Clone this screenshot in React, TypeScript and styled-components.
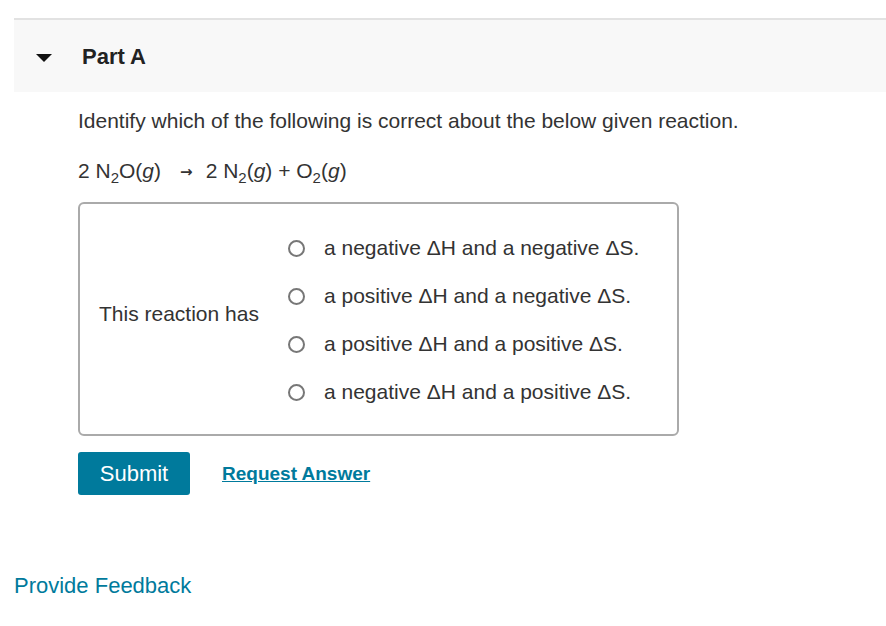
import React from 'react';
import styled, {createGlobalStyle} from 'styled-components';

const teal = '#007a9c';
const ink = '#333';

const GlobalStyle = createGlobalStyle`
  body {
    margin: 0;
    background: white;
    font-family: "Liberation Sans", Arial, sans-serif;
    color: ${ink};
  }
`;

const Page = styled.div`
  padding: 18px 0 0 14px;
`;

const Header = styled.div`
  display: flex;
  align-items: center;
  height: 72px;
  border-top: 2px solid #e2e2e2;
  background: #f8f8f8;
`;

const Caret = styled.span`
  width: 0;
  height: 0;
  margin: 3px 30px 0 22px;
  border-left: 8px solid transparent;
  border-right: 8px solid transparent;
  border-top: 8px solid #111;
`;

const Title = styled.h2`
  margin: 1px 0 0;
  font-size: 22px;
  font-weight: bold;
  color: #222;
`;

const Body = styled.div`
  padding: 0 0 0 64px;
`;

const Prompt = styled.p`
  margin: 18px 0 0;
  font-size: 21px;
  line-height: 22px;
`;

const Equation = styled.p`
  margin: 28px 0 0;
  font-size: 21px;
  line-height: 22px;
  white-space: pre;
  sub {
    font-size: 15px;
    line-height: 0;
    vertical-align: -5px;
  }
`;

const Arrow = styled.span`
  display: inline-block;
  margin: 0 13px 0 19px;
  font-family: "DejaVu Sans", sans-serif;
  font-size: 15px;
  font-weight: bold;
  line-height: 0;
  vertical-align: 1px;
`;

const Box = styled.div`
  display: flex;
  width: 601px;
  box-sizing: border-box;
  margin-top: 20px;
  padding: 20px 0 18px 19px;
  border: 2px solid #aaa;
  border-radius: 6px;
`;

const Label = styled.div`
  align-self: center;
  width: 189px;
  margin-bottom: 12px;
  font-size: 21px;
`;

const Options = styled.div`
  display: flex;
  flex-direction: column;
`;

const Option = styled.label`
  display: flex;
  align-items: center;
  height: 48px;
  font-size: 21px;
`;

const Radio = styled.span`
  width: 13px;
  height: 13px;
  margin-right: 19px;
  border: 2px solid #777;
  border-radius: 50%;
  flex: none;
`;

const Actions = styled.div`
  display: flex;
  align-items: center;
  gap: 32px;
  margin-top: 16px;
`;

const SubmitButton = styled.button`
  width: 112px;
  height: 43px;
  border: none;
  border-radius: 3px;
  background: ${teal};
  color: white;
  font-family: inherit;
  font-size: 22px;
`;

const LinkButton = styled.a`
  color: ${teal};
  font-size: 19px;
  font-weight: bold;
  text-decoration: underline;
`;

const Feedback = styled.a`
  display: block;
  margin-top: 78px;
  color: ${teal};
  font-size: 22px;
`;

const options = [
  'a negative ΔH and a negative ΔS.',
  'a positive ΔH and a negative ΔS.',
  'a positive ΔH and a positive ΔS.',
  'a negative ΔH and a positive ΔS.',
];

export default function App() {
  return (
    <Page>
      <GlobalStyle/>
      <Header>
        <Caret/>
        <Title>Part A</Title>
      </Header>
      <Body>
        <Prompt>Identify which of the following is correct about the below given reaction.</Prompt>
        <Equation>
          2 N<sub>2</sub>O(<i>g</i>)<Arrow>→</Arrow>2 N<sub>2</sub>(<i>g</i>) + O<sub>2</sub>(<i>g</i>)
        </Equation>
        <Box>
          <Label>This reaction has</Label>
          <Options>
            {options.map(text => (
              <Option key={text}>
                <Radio/>
                {text}
              </Option>
            ))}
          </Options>
        </Box>
        <Actions>
          <SubmitButton>Submit</SubmitButton>
          <LinkButton>Request Answer</LinkButton>
        </Actions>
      </Body>
      <Feedback>Provide Feedback</Feedback>
    </Page>
  );
}
